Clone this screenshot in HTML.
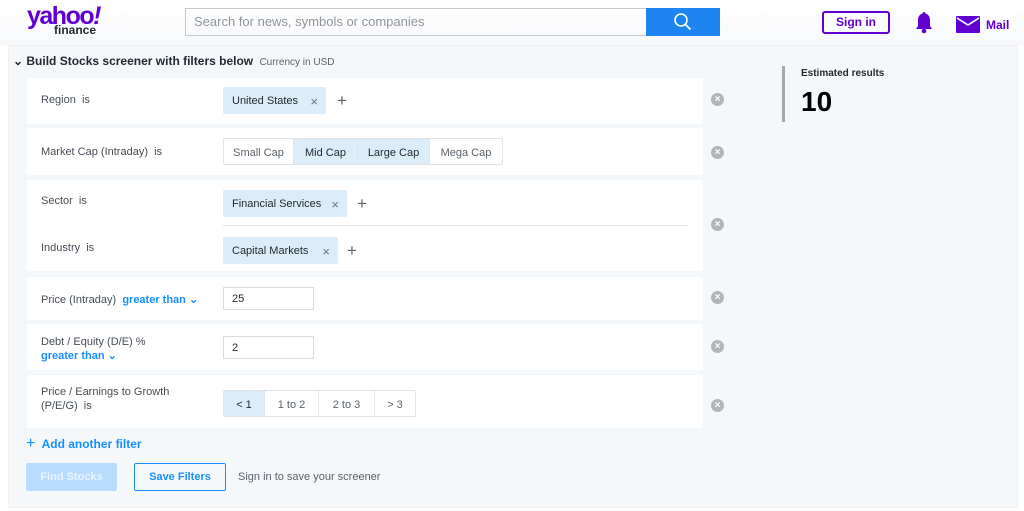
<!DOCTYPE html>
<html><head><style>
*{box-sizing:border-box;margin:0;padding:0}
body{width:1024px;height:511px;background:#fff;font-family:"Liberation Sans",sans-serif;position:relative;overflow:hidden;color:#232a31}
.a{position:absolute}
.hdr{left:0;top:0;width:1024px;height:45px;background:linear-gradient(#fff,#f7f8fa)}
.panel{left:8px;top:45px;width:1010px;height:463px;background:#f5f8fa;border:1px solid #eef0f2}
.card{position:absolute;left:27px;width:676px;background:#fff;border-radius:2px}
.lbl{position:absolute;font-size:11px;color:#464e56}
.chip{position:absolute;height:27px;background:#dcedfa;border-radius:2px;font-size:11px;color:#232a31;line-height:29px;padding-left:9px}
.chip span{position:absolute;right:8px;color:#6e7780;font-size:13px}
.plus{position:absolute;font-size:17px;color:#5b636a;line-height:1}
.x{position:absolute;width:13px;height:13px;border-radius:50%;background:#b0b6bb;color:#fff;font-size:10px;line-height:13px;text-align:center;font-weight:bold}
.seg{position:absolute;display:flex;border:1px solid #e0e4e9;border-radius:2px;height:27px;font-size:11px;color:#5b636a}
.seg div{border-right:1px solid #e0e4e9;line-height:28px;text-align:center}
.seg div:last-child{border-right:0}
.sel{background:#dcedfa;color:#232a31}
.inp{position:absolute;left:223px;width:91px;height:23px;border:1px solid #d8dce0;font-size:11px;line-height:23px;padding-left:8px}
.blue{color:#188fff;font-weight:bold}
</style></head><body>
<div class="a hdr"></div>
<div class="a" style="left:27px;top:3px;font-size:25px;font-weight:bold;color:#6001d2;letter-spacing:-1.5px;line-height:26px">yahoo<span style="font-style:italic">!</span></div>
<div class="a" style="left:54px;top:24px;font-size:12px;font-weight:bold;color:#232a31;line-height:12px">finance</div>
<div class="a" style="left:185px;top:8px;width:462px;height:28px;border:1px solid #c6c9cc;border-right:0;font-size:13px;color:#8f969c;line-height:26px;padding-left:8px">Search for news, symbols or companies</div>
<div class="a" style="left:646px;top:8px;width:74px;height:28px;background:#1e85f0"><svg width="74" height="28"><circle cx="35" cy="12" r="6" fill="none" stroke="#fff" stroke-width="1.6"/><path d="M39.5 16.5l5 5" stroke="#fff" stroke-width="1.8"/></svg></div>
<div class="a" style="left:822px;top:11px;width:68px;height:23px;border:2px solid #6001d2;border-radius:3px;color:#6001d2;font-size:12px;font-weight:bold;text-align:center;line-height:19px">Sign in</div>
<svg class="a" style="left:913px;top:11px" width="22" height="24"><path d="M11 1c-1 0-1.5 1-1.5 1.5C6 3.5 5 6.5 5 9v6l-2 3h16l-2-3V9c0-2.5-1-5.5-4.5-6.5C12.5 2 12 1 11 1z" fill="#6001d2"/><circle cx="11" cy="20" r="2.3" fill="#6001d2"/></svg>
<svg class="a" style="left:956px;top:16px" width="24" height="17"><rect x="0" y="0" width="24" height="17" rx="1" fill="#6001d2"/><path d="M1 2l11 7 11-7" stroke="#fff" stroke-width="1.6" fill="none"/></svg>
<div class="a" style="left:986px;top:18px;font-size:12px;font-weight:bold;color:#6001d2">Mail</div>

<div class="a panel"></div>
<div class="a" style="left:13px;top:54px;font-size:12px;font-weight:bold">⌄ Build Stocks screener with filters below <span style="font-weight:normal;font-size:10px;color:#5b636a;margin-left:3px">Currency in USD</span></div>
<div class="a" style="left:782px;top:66px;width:3px;height:56px;background:#a3a9ae"></div>
<div class="a" style="left:801px;top:68px;font-size:10px;font-weight:bold">Estimated results</div>
<div class="a" style="left:801px;top:86px;font-size:28px;font-weight:bold;color:#000">10</div>

<div class="card" style="top:78px;height:46px"></div>
<div class="lbl" style="left:41px;top:94px">Region&nbsp; is</div>
<div class="chip" style="left:223px;top:87px;width:103px">United States<span>×</span></div>
<div class="plus" style="left:337px;top:92px">+</div>
<div class="x" style="left:711px;top:93px">×</div>

<div class="card" style="top:128px;height:47px"></div>
<div class="lbl" style="left:41px;top:146px">Market Cap (Intraday)&nbsp; is</div>
<div class="seg" style="left:223px;top:138px"><div style="width:70px">Small Cap</div><div class="sel" style="width:64px">Mid Cap</div><div class="sel" style="width:72px">Large Cap</div><div style="width:72px">Mega Cap</div></div>
<div class="x" style="left:711px;top:146px">×</div>

<div class="card" style="top:180px;height:91px"></div>
<div class="lbl" style="left:41px;top:195px">Sector&nbsp; is</div>
<div class="chip" style="left:223px;top:190px;width:124px">Financial Services<span>×</span></div>
<div class="plus" style="left:357px;top:195px">+</div>
<div class="a" style="left:223px;top:225px;width:465px;height:1px;background:#e0e4e9"></div>
<div class="lbl" style="left:41px;top:242px">Industry&nbsp; is</div>
<div class="chip" style="left:223px;top:237px;width:115px">Capital Markets<span>×</span></div>
<div class="plus" style="left:347px;top:242px">+</div>
<div class="x" style="left:711px;top:218px">×</div>

<div class="card" style="top:277px;height:43px"></div>
<div class="lbl" style="left:41px;top:293px">Price (Intraday)&nbsp; <span class="blue">greater than ⌄</span></div>
<div class="inp" style="top:287px">25</div>
<div class="x" style="left:711px;top:291px">×</div>

<div class="card" style="top:324px;height:46px"></div>
<div class="lbl" style="left:41px;top:335px;line-height:14px">Debt / Equity (D/E) %<br><span class="blue">greater than ⌄</span></div>
<div class="inp" style="top:336px">2</div>
<div class="x" style="left:711px;top:340px">×</div>

<div class="card" style="top:375px;height:53px"></div>
<div class="lbl" style="left:41px;top:385px;line-height:14px">Price / Earnings to Growth<br>(P/E/G)&nbsp; is</div>
<div class="seg" style="left:223px;top:390px"><div class="sel" style="width:41px">&lt; 1</div><div style="width:54px">1 to 2</div><div style="width:56px">2 to 3</div><div style="width:40px">&gt; 3</div></div>
<div class="x" style="left:711px;top:399px">×</div>

<div class="a" style="left:26px;top:435px;font-size:12px;color:#188fff;font-weight:bold"><span style="font-size:16px;font-weight:normal">+</span>&nbsp; Add another filter</div>
<div class="a" style="left:26px;top:463px;width:91px;height:28px;background:#b7dcfd;border-radius:2px;color:#e8f4ff;font-size:11px;font-weight:bold;text-align:center;line-height:28px">Find Stocks</div>
<div class="a" style="left:134px;top:463px;width:92px;height:28px;border:1px solid #188fff;border-radius:2px;color:#188fff;font-size:11px;font-weight:bold;text-align:center;line-height:26px">Save Filters</div>
<div class="a" style="left:238px;top:471px;font-size:11px;color:#5b636a">Sign in to save your screener</div>
</body></html>
